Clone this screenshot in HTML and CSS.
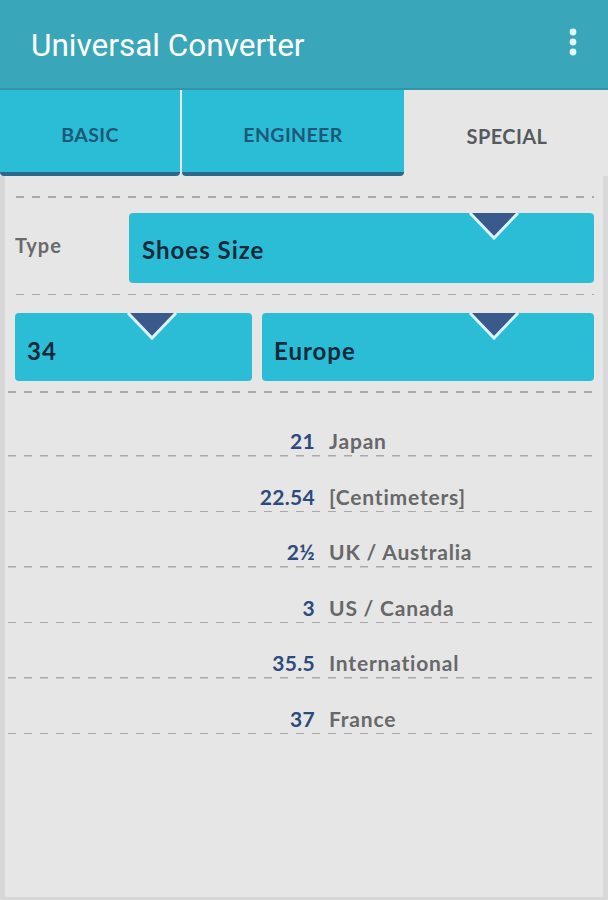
FILE: index.html
```html
<!DOCTYPE html>
<html>
<head>
<meta charset="utf-8">
<link rel="stylesheet" href="styles.css">
</head>
<body>
<div class="app">
  <header class="appbar">
    <div class="title">Universal Converter</div>
    <svg class="menu" width="12" height="30" viewBox="0 0 12 30"><circle cx="6" cy="5" r="3.4" fill="#e6f7fa"/><circle cx="6" cy="15" r="3.4" fill="#e6f7fa"/><circle cx="6" cy="25" r="3.4" fill="#e6f7fa"/></svg>
  </header>
  <nav class="tabs">
    <div class="tab tab-basic">BASIC</div>
    <div class="tab tab-eng">ENGINEER</div>
    <div class="tab tab-active">SPECIAL</div>
  </nav>
  <main class="content">
    <div class="dash"></div>
    <div class="type-row">
      <div class="type-label">Type</div>
      <div class="select">Shoes Size<svg class="tri" width="52" height="28" viewBox="0 0 52 28"><polygon points="2,0 50,0 26,25" fill="#3a5a8c"/><polyline points="2,0 26,25 50,0" fill="none" stroke="#d9f3f8" stroke-width="3"/></svg></div>
    </div>
    <div class="dash dash-mid"></div>
    <div class="pair-row">
      <div class="select select-sm">34<svg class="tri" width="52" height="28" viewBox="0 0 52 28"><polygon points="2,0 50,0 26,25" fill="#3a5a8c"/><polyline points="2,0 26,25 50,0" fill="none" stroke="#d9f3f8" stroke-width="3"/></svg></div>
      <div class="select select-sm">Europe<svg class="tri" width="52" height="28" viewBox="0 0 52 28"><polygon points="2,0 50,0 26,25" fill="#3a5a8c"/><polyline points="2,0 26,25 50,0" fill="none" stroke="#d9f3f8" stroke-width="3"/></svg></div>
    </div>
    <div class="dash dash-wide dash-after"></div>
    <ul class="results">
      <li class="result"><span class="num">21</span><span class="name">Japan</span></li>
      <li class="result"><span class="num">22.54</span><span class="name">[Centimeters]</span></li>
      <li class="result"><span class="num">2½</span><span class="name">UK / Australia</span></li>
      <li class="result"><span class="num">3</span><span class="name">US / Canada</span></li>
      <li class="result"><span class="num">35.5</span><span class="name">International</span></li>
      <li class="result"><span class="num">37</span><span class="name">France</span></li>
    </ul>
  </main>
</div>
</body>
</html>
```

FILE: styles.css
```css
* { box-sizing: border-box; }
html, body { margin: 0; padding: 0; }
body {
  width: 608px;
  height: 900px;
  overflow: hidden;
  background: #e6e6e6;
  font-family: Lato, "Noto Sans", sans-serif;
}
.app {
  display: flex;
  flex-direction: column;
  height: 900px;
}
.appbar {
  height: 90px;
  background: #3aa6b9;
  border-bottom: 2px solid #3493a6;
  display: flex;
  align-items: center;
  justify-content: space-between;
  padding: 0 29px 0 31px;
  flex-shrink: 0;
}
.title {
  font-family: Roboto, "Noto Sans", sans-serif;
  font-size: 31.5px;
  color: #ffffff;
  margin-top: 2px;
}
.menu { margin-top: -4px; }
.tabs {
  display: flex;
  height: 86px;
  flex-shrink: 0;
  background: #e6e6e6;
}
.tab {
  display: flex;
  align-items: center;
  justify-content: center;
  font-weight: 700;
  font-size: 19.5px;
  letter-spacing: 0.4px;
  color: #1d5876;
  padding-top: 6px;
}
.tab-basic, .tab-eng {
  background: #2bbdd6;
  border-bottom: 4px solid #2c688b;
  border-radius: 0 0 4px 4px;
}
.tab-basic { width: 180px; }
.tab-eng { width: 222px; margin-left: 2px; }
.tab-active {
  flex: 1;
  color: #555a5e;
  font-size: 20px;
  padding-left: 2px;
}
.content {
  flex: 1;
  background: #e6e6e6;
  border-left: 5px solid #d7d7d7;
  border-right: 5px solid #d9d9d9;
  border-bottom: 3px solid #d7d7d7;
  padding: 20px 9px 0 10px;
}
.dash {
  height: 1.5px;
  background: repeating-linear-gradient(90deg, #a9a9a9 0 8px, transparent 8px 16px);
  margin-left: 1px;
}
.type-row {
  display: flex;
  align-items: center;
  margin-top: 15px;
}
.type-label {
  width: 114px;
  font-weight: 700;
  font-size: 20px;
  letter-spacing: 1px;
  color: #6a6a6a;
  margin-top: -6px;
}
.select {
  position: relative;
  flex: 1;
  height: 70px;
  background: #2bbdd6;
  border-radius: 4px;
  display: flex;
  align-items: center;
  padding-left: 13px;
  padding-top: 3px;
  font-weight: 700;
  font-size: 24px;
  letter-spacing: 1px;
  color: #132a3c;
}
.tri {
  position: absolute;
  top: 0;
  right: 74px;
}
.dash-mid { margin-top: 11px; }
.pair-row {
  display: grid;
  grid-template-columns: 237px 1fr;
  gap: 10px;
  margin-top: 18px;
}
.select-sm {
  height: 68px;
  padding-left: 12px;
  padding-top: 6px;
}
.dash-wide { margin-left: -7px; margin-right: -4px; }
.dash-after { margin-top: 10px; }
.results {
  list-style: none;
  margin: 0 -4px 0 -7px;
  padding: 9px 0 0 0;
}
.result {
  display: flex;
  gap: 14px;
  height: 55.5px;
  padding-top: 28px;
  line-height: 24px;
  font-size: 21px;
  font-weight: 700;
  background: repeating-linear-gradient(90deg, #a9a9a9 0 8px, transparent 8px 16px) left bottom / 100% 1.5px no-repeat;
}
.result:first-child { height: 55px; padding-top: 27px; }
.num {
  width: 307px;
  text-align: right;
  color: #2d4a7c;
  letter-spacing: 0.3px;
}
.name {
  color: #666869;
  letter-spacing: 0.8px;
}
```
